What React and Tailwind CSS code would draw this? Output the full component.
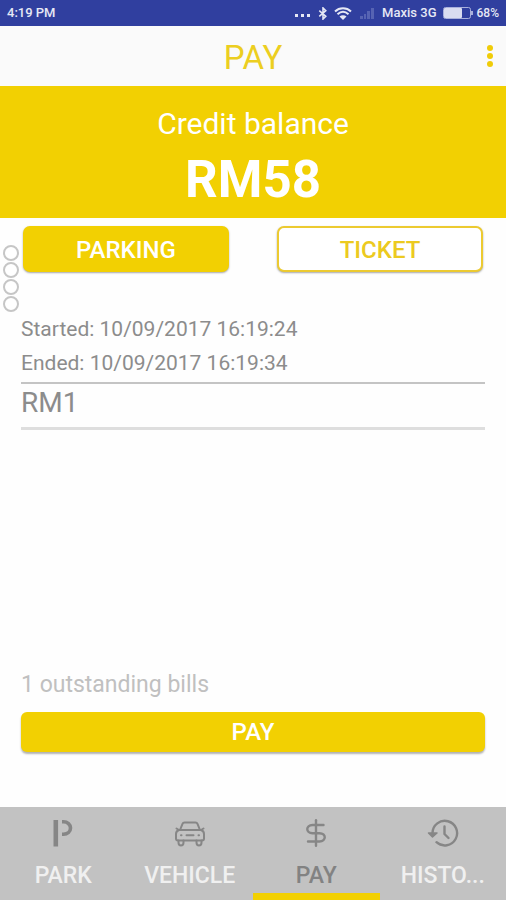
import React from "react";

function BluetoothIcon() {
  return (
    <svg viewBox="0 0 10 14" className="h-[13px] w-[10px]" fill="none" stroke="currentColor" strokeWidth="1.7" aria-hidden="true">
      <path d="M1 4l7 6-3 3V1l3 3-7 6" />
    </svg>
  );
}

function WifiIcon() {
  return (
    <svg viewBox="0 0 18 13" className="h-[13px] w-[18px]" fill="none" stroke="currentColor" strokeWidth="2" aria-hidden="true">
      <path d="M1 4.5C5.5 0.3 12.5 0.3 17 4.5" />
      <path d="M3.5 7.2C7 4 11 4 14.5 7.2" />
      <path d="M9 13L5.5 9.500C7.500 7.800 10.500 7.800 12.500 9.500Z" fill="currentColor" stroke="none" />
    </svg>
  );
}

function SignalIcon() {
  return (
    <svg viewBox="0 0 14 11" className="h-[11px] w-[14px]" fill="#5663b3" aria-hidden="true">
      <rect x="0" y="8" width="3" height="3" />
      <rect x="4" y="6" width="2" height="5" />
      <rect x="7" y="3" width="3" height="8" />
      <rect x="11" y="0" width="3" height="11" />
    </svg>
  );
}

function BatteryIcon() {
  return (
    <svg viewBox="0 0 30 12" className="h-[12px] w-[30px]" aria-hidden="true">
      <rect x="0.5" y="0.5" width="27" height="11" rx="2" fill="none" stroke="#a9b0dc" />
      <rect x="1" y="1" width="18" height="10" rx="1" fill="#d9dcf0" />
      <rect x="28" y="4" width="2" height="4" fill="#a9b0dc" />
    </svg>
  );
}

function ParkIcon() {
  return (
    <svg viewBox="0 0 20 28" className="h-7 w-5" fill="none" stroke="currentColor" aria-hidden="true">
      <path d="M2.800 1V27.500" strokeWidth="4.600" />
      <path d="M9 2.800H10.500C14.500 2.800 17.500 5.500 17.500 9S14.500 15.200 10.500 15.200H9" strokeWidth="3.600" />
    </svg>
  );
}

function VehicleIcon() {
  return (
    <svg viewBox="0 0 32 28" className="h-7 w-8" fill="none" stroke="currentColor" strokeWidth="2" strokeLinejoin="round" strokeLinecap="round" aria-hidden="true">
      <path d="M6 11L8.500 4.800Q9 3.500 10.500 3.500H21.500Q23 3.500 23.500 4.800L26 11" />
      <path d="M5 11H27Q30 12 30 15V19.500Q30 21.500 28 21.500H4Q2 21.500 2 19.500V15Q2 12 5 11Z" />
      <path d="M5 11L2.500 9.500M27 11L29.500 9.500" />
      <path d="M4.500 21.500V23.500Q4.500 26.500 7 26.500T9.500 23.500V21.500M22.500 21.500V23.500Q22.500 26.500 25 26.500T27.500 23.500V21.500" />
      <path d="M12.500 16.200H19.500M7 16.200H7.500M24.500 16.200H25" />
    </svg>
  );
}

function DollarIcon() {
  return (
    <svg viewBox="0 0 22 28" className="h-7 w-[22px]" fill="none" stroke="currentColor" strokeWidth="2.4" strokeLinecap="round" aria-hidden="true">
      <path d="M11 1.200V26.800" />
      <path d="M18.500 6H7.500C0.500 6 0.500 14.200 7.500 14.200H14.500C21.500 14.200 21.500 22.500 14.500 22.500H3" />
    </svg>
  );
}

function HistoryIcon() {
  return (
    <svg viewBox="0 0 32 28" className="h-7 w-8" fill="none" stroke="currentColor" strokeWidth="2.400" strokeLinecap="round" strokeLinejoin="round" aria-hidden="true">
      <path d="M5.500 16V14A12.300 12.300 0 1 1 9.500 23.200" />
      <path d="M1.500 14L5.500 18L10 14Z" fill="currentColor" strokeWidth="1.500" />
      <path d="M17.500 7.500V15L21.500 19" />
    </svg>
  );
}

const tabs = [
  { label: "PARK", Icon: ParkIcon },
  { label: "VEHICLE", Icon: VehicleIcon },
  { label: "PAY", Icon: DollarIcon, active: true },
  { label: "HISTO...", Icon: HistoryIcon },
];

export default function App() {
  return (
    <div className="relative flex min-h-screen flex-col bg-[#fefefe] font-['Roboto',sans-serif]">
      <div className="flex h-[26px] items-center justify-between bg-[#303f9f] px-[7px] text-[13px] font-medium text-[#e6e8f5]">
        <span>4:19 PM</span>
        <div className="flex items-center">
          <div className="mt-1 mr-2 flex gap-[3px]" aria-hidden="true">
            <i className="size-[3px] bg-current" />
            <i className="size-[3px] bg-current" />
            <i className="size-[3px] bg-current" />
          </div>
          <BluetoothIcon />
          <span className="mr-2 ml-[6px] flex"><WifiIcon /></span>
          <SignalIcon />
          <span className="mr-[6px] ml-2">Maxis 3G</span>
          <BatteryIcon />
          <span className="ml-1 text-[12px]">68%</span>
        </div>
      </div>

      <header className="grid h-[60px] grid-cols-[1fr_auto_1fr] items-center bg-[#fafafa]">
        <h1 className="col-start-2 pt-1 text-[33px] leading-10 text-[#ecce20]">PAY</h1>
        <button type="button" aria-label="More options" className="flex flex-col gap-[2px] justify-self-end px-[13px] text-[#f0cc08]">
          <i className="size-[6px] rounded-full bg-current" />
          <i className="size-[6px] rounded-full bg-current" />
          <i className="size-[6px] rounded-full bg-current" />
        </button>
      </header>

      <section className="flex flex-col items-center bg-[#f2d002] pt-5 pb-[6px] text-white">
        <p className="text-[30px] leading-9">Credit balance</p>
        <p className="pt-[6px] text-[51px] leading-[64px] font-bold">RM58</p>
      </section>

      <div className="grid grid-cols-2 gap-12 px-[23px] pt-2 text-[24px] font-medium">
        <button type="button" className="h-[46px] rounded-[7px] bg-[#f2d002] pt-[2px] text-white shadow-[0_1px_2px_rgba(0,0,0,0.35)]">PARKING</button>
        <button type="button" className="h-[46px] rounded-[7px] border-2 border-[#ecca30] bg-white pt-[2px] text-[#ecca20] shadow-[0_1px_2px_rgba(0,0,0,0.35)]">TICKET</button>
      </div>

      <main className="flex flex-1 flex-col px-[21px] pt-10 pb-[55px]">
        <div className="border-b-2 border-[#c4c4c4] pb-[2px] text-[21px] leading-[34px] text-[#8c8c8c]">
          <p>Started: 10/09/2017 16:19:24</p>
          <p>Ended: 10/09/2017 16:19:34</p>
        </div>
        <p className="border-b-[3px] border-[#dedede] pt-[1px] pb-[6px] text-[28px] leading-9 text-[#8c8c8c]">RM1</p>
        <p className="mt-auto pb-[11px] text-[23px] leading-8 text-[#c0c0c0]">1 outstanding bills</p>
        <button type="button" className="h-10 rounded-[6px] bg-[#f2d002] text-[24px] font-medium text-white shadow-[0_2px_2px_rgba(0,0,0,0.3)]">PAY</button>
      </main>

      <nav className="grid grid-cols-4 bg-[#c2c2c2]">
        {tabs.map(({ label, Icon, active }) => (
          <button
            key={label}
            type="button"
            className={
              active
                ? "flex flex-col items-center border-b-[7px] border-[#f2d002] pt-3 text-[#828282]"
                : "flex flex-col items-center border-b-[7px] border-transparent pt-3 text-[#f0f0f0]"
            }
          >
            <span className="text-[#868686]"><Icon /></span>
            <span className="pt-[13px] pb-px text-[23px] leading-8 font-medium">{label}</span>
          </button>
        ))}
      </nav>

      <div className="absolute top-[245px] left-[3px] flex flex-col gap-px" aria-hidden="true">
        <i className="size-4 rounded-full border-2 border-[#c6c6c6] bg-white" />
        <i className="size-4 rounded-full border-2 border-[#c6c6c6] bg-white" />
        <i className="size-4 rounded-full border-2 border-[#c6c6c6] bg-white" />
        <i className="size-4 rounded-full border-2 border-[#c6c6c6] bg-white" />
      </div>
    </div>
  );
}
